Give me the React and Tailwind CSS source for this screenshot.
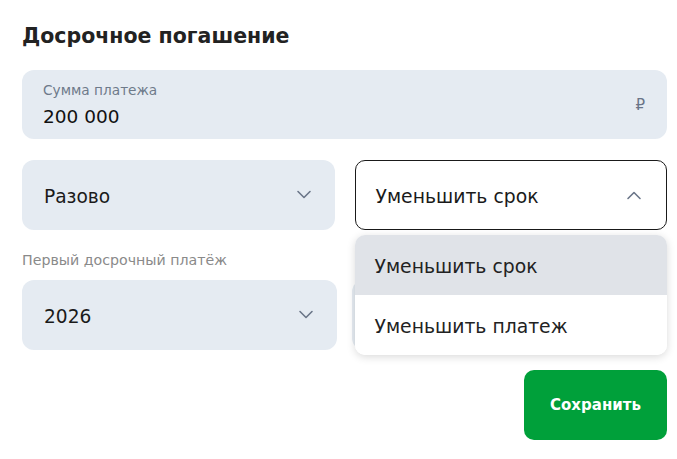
import { useState } from 'react';

const Chevron = ({ up = false }) => (
  <svg width="16" height="10" viewBox="0 0 16 10" fill="none" className="shrink-0">
    <path
      d={up ? 'M2 8.5L8 2.5L14 8.5' : 'M2 1.5L8 7.5L14 1.5'}
      stroke="#6b7689"
      strokeWidth="1.6"
      strokeLinecap="round"
      strokeLinejoin="round"
    />
  </svg>
);

const SelectBox = ({ value, className = '' }) => (
  <div className={`flex h-[70px] items-center justify-between rounded-[12px] bg-[#e5ebf2] pl-[22px] pr-[23px] ${className}`}>
    <span className="pt-[4px] text-[18.6px] text-[#1a1a1a]">{value}</span>
    <Chevron />
  </div>
);

export default function App() {
  const [term] = useState('Уменьшить срок');
  const options = ['Уменьшить срок', 'Уменьшить платеж'];

  return (
    <div className="h-[459px] w-[677px] bg-white pl-[22px] pr-[10px] pt-[22px] font-['DejaVu_Sans',sans-serif]">
      <h1 className="text-[20.5px] font-bold leading-[28px] text-[#222]">Досрочное погашение</h1>

      {/* сумма */}
      <div className="mt-[20px] flex h-[69px] items-center justify-between rounded-[12px] bg-[#e5ebf2] pl-[21px] pr-[22px]">
        <div className="flex flex-col">
          <span className="text-[13.7px] leading-[18px] text-[#6e7a8a]">Сумма платежа</span>
          <span className="mt-[6px] text-[18.5px] leading-[24px] text-[#111]">200 000</span>
        </div>
        <span className="pt-[2px] text-[15px] text-[#6a7588]">₽</span>
      </div>

      <div className="mt-[21px] grid grid-cols-2 gap-x-[20px]">
        <SelectBox value="Разово" />

        <div className="relative">
          <div className="flex h-[70px] items-center justify-between rounded-[10px] border border-[#1a1a1a] bg-white pl-[20px] pr-[24px]">
            <span className="pt-[4px] text-[18.8px] text-[#1a1a1a]">{term}</span>
            <Chevron up />
          </div>
          <div className="absolute left-0 right-0 top-[75px] z-10 overflow-hidden rounded-[10px] bg-white shadow-[0_2px_8px_rgba(0,0,0,0.15)]">
            {options.map((o) => (
              <div
                key={o}
                className={`flex h-[60px] items-center px-[20px] pt-[4px] text-[18.8px] text-[#222] ${o === term ? 'bg-[#e0e3e8]' : 'bg-white'}`}
              >
                {o}
              </div>
            ))}
          </div>
        </div>

        <div className="col-span-2 mt-[20px] grid grid-cols-2 gap-x-[15px]">
          <div>
            <div className="mb-[10px] text-[14.2px] leading-[20px] text-[#8a8a8a]">Первый досрочный платёж</div>
            <SelectBox value="2026" />
          </div>
          <div>
            <div className="mb-[10px] h-[20px]" />
            <SelectBox value="" />
          </div>
        </div>
      </div>

      <div className="mt-[20px] flex justify-end">
        <button className="h-[70px] w-[143px] rounded-[10px] bg-[#00a03a] text-[15px] font-bold text-white">
          Сохранить
        </button>
      </div>
    </div>
  );
}
